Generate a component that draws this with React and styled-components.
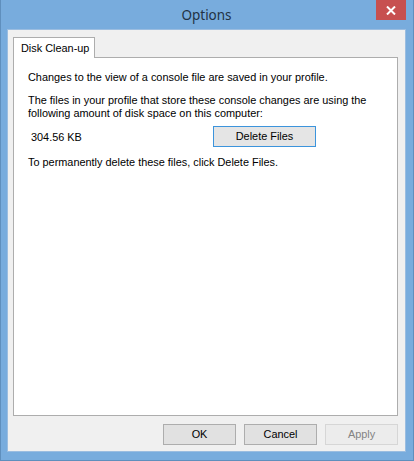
import React from "react";
import styled, { createGlobalStyle } from "styled-components";

const Global = createGlobalStyle`
  html, body { margin: 0; padding: 0; background: #78acdd; }
  * { box-sizing: border-box; }
`;

const Window = styled.div`
  width: 414px;
  height: 461px;
  border: 1px solid #5f8fbd;
  border-top: none;
  background: #78acdd;
  display: flex;
  flex-direction: column;
  padding: 0 7px 8px 6px;
`;

const TitleBar = styled.div`
  height: 29px;
  display: grid;
  grid-template-columns: 1fr auto 1fr;
  align-items: start;
`;

const Title = styled.div`
  grid-column: 2;
  font-family: "Noto Sans", "Open Sans", sans-serif;
  font-size: 13.5px;
  line-height: 31px;
  color: #223244;
`;

const Close = styled.div`
  grid-column: 3;
  justify-self: end;
  width: 30px;
  height: 20px;
  background: #c75050;
  display: flex;
  align-items: center;
  justify-content: center;
`;

const Client = styled.div`
  flex: 1;
  background: #f0f0f0;
  border: 1px solid #9bbde0;
  display: flex;
  flex-direction: column;
  padding: 7px 7px 5px 5px;
  font-family: "Liberation Sans", Arial, sans-serif;
  font-size: 10.9px;
  color: #000;
`;

const TabStrip = styled.div`
  display: flex;
  height: 20px;
`;

const Tab = styled.div`
  width: 82px;
  height: 21px;
  background: #fff;
  border: 1px solid #adadad;
  border-bottom: none;
  padding-left: 7px;
  line-height: 20px;
  position: relative;
  z-index: 1;
`;

const Panel = styled.div`
  height: 359px;
  background: #fff;
  border: 1px solid #adadad;
  padding: 13px 14px;
  display: flex;
  flex-direction: column;
`;

const Para = styled.div`
  line-height: 13px;
  margin-bottom: ${(p) => p.$mb || 0}px;
`;

const SizeRow = styled.div`
  display: flex;
  align-items: center;
  height: 21px;
  margin-bottom: 9px;
`;

const SizeLabel = styled.div`
  width: 185px;
  padding-left: 3px;
`;

const Button = styled.div`
  width: ${(p) => p.$w || 73}px;
  height: 21px;
  background: ${(p) => (p.$disabled ? "#ececec" : p.$focus ? "#e5e5e5" : "#e1e1e1")};
  border: 1px solid ${(p) => (p.$focus ? "#3c94dc" : p.$disabled ? "#d6d6d6" : "#adadad")};
  color: ${(p) => (p.$disabled ? "#838383" : "#000")};
  display: flex;
  align-items: center;
  justify-content: center;
  line-height: 13px;
`;

const ButtonRow = styled.div`
  display: flex;
  justify-content: flex-end;
  gap: 8px;
  margin-top: 8px;
`;

export default function App() {
  return (
    <>
      <Global />
      <Window>
        <TitleBar>
          <Title>Options</Title>
          <Close>
            <svg width="10" height="9" viewBox="0 0 10 9">
              <path d="M1 0.5 L9 8.5 M9 0.5 L1 8.5" stroke="#fff" strokeWidth="2" />
            </svg>
          </Close>
        </TitleBar>
        <Client>
          <TabStrip>
            <Tab>Disk Clean-up</Tab>
          </TabStrip>
          <Panel>
            <Para $mb={10}>Changes to the view of a console file are saved in your profile.</Para>
            <Para>The files in your profile that store these console changes are using the</Para>
            <Para $mb={6}>following amount of disk space on this computer:</Para>
            <SizeRow>
              <SizeLabel>304.56 KB</SizeLabel>
              <Button $w={103} $focus>Delete Files</Button>
            </SizeRow>
            <Para>To permanently delete these files, click Delete Files.</Para>
          </Panel>
          <ButtonRow>
            <Button>OK</Button>
            <Button>Cancel</Button>
            <Button $disabled>Apply</Button>
          </ButtonRow>
        </Client>
      </Window>
    </>
  );
}
